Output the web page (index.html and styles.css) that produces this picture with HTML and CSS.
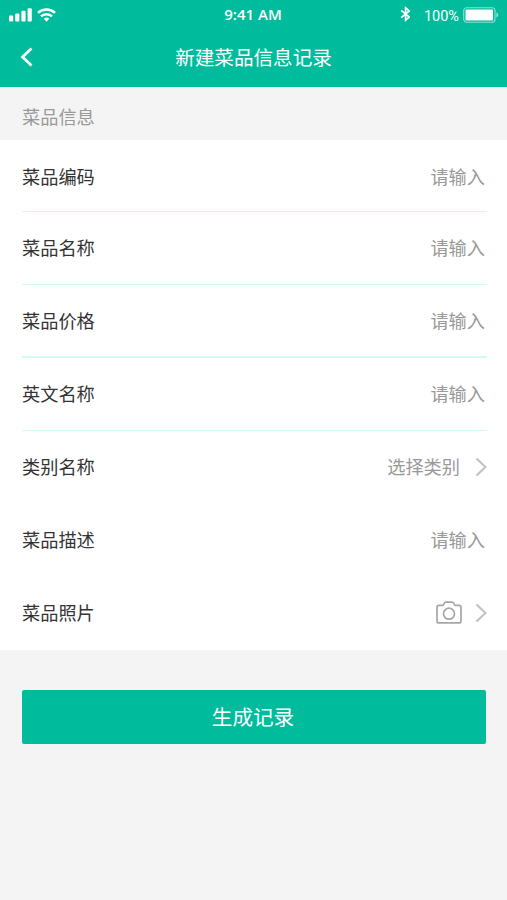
FILE: index.html
```
<!DOCTYPE html>
<html lang="zh-CN">
<head>
    <meta charset="UTF-8">
    <meta name="viewport" content="width=device-width, initial-scale=1.0">
    <title>新建菜品信息记录</title>
    <link rel="stylesheet" href="styles.css">
</head>
<body>

<header class="header">
    <div class="status-bar">
        <div class="status-left">
            <svg class="signal" width="24" height="14" viewBox="0 0 24 14" fill="#fff">
                <rect x="0" y="7.5" width="4.2" height="6" rx="1"/>
                <rect x="6.2" y="5.5" width="4.2" height="8" rx="1"/>
                <rect x="12.4" y="2.8" width="4.2" height="10.7" rx="1"/>
                <rect x="18.6" y="0.2" width="4.2" height="13.3" rx="1"/>
            </svg>
            <svg class="wifi" width="19" height="14" viewBox="0 0 19 14" fill="none" stroke="#fff" stroke-width="2.5">
                <path d="M1 4.900a12.300 12.300 0 0 1 17 0"/>
                <path d="M4 8.400a8 8 0 0 1 11 0"/>
                <path d="M6.700 10.800a4.200 4.200 0 0 1 5.600 0L9.500 13.700z" fill="#fff" stroke="none"/>
            </svg>
        </div>
        <span class="time">9:41 AM</span>
        <div class="status-right">
            <svg class="bluetooth" width="10" height="16" viewBox="0 0 10 16" fill="none" stroke="#fff" stroke-width="1.7">
                <path d="M1.200 4.300L9.300 11L5.600 14.200V1.800L9.300 5L1.200 11.700"/>
            </svg>
            <span class="percent">100%</span>
            <svg class="battery" width="36" height="16" viewBox="0 0 36 16">
                <rect x="0.7" y="0.7" width="31.3" height="14.6" rx="3" fill="none" stroke="#8fe0cf" stroke-width="1.1"/>
                <rect x="2.5" y="2.5" width="27.5" height="11" rx="1" fill="#fff"/>
                <path d="M33.300 5.500q2 .8 2 2.500t-2 2.500z" fill="#8fe0cf"/>
            </svg>
        </div>
    </div>
    <div class="nav-bar">
        <svg class="back" width="13" height="20" viewBox="0 0 13 20" fill="none" stroke="#fff" stroke-width="2.7">
            <path d="M11.500 1.500L2.500 10l9 8.500"/>
        </svg>
        <h1>新建菜品信息记录</h1>
    </div>
</header>

<div class="section-title">菜品信息</div>

<div class="form-list">
    <div class="row line first">
        <span class="label">菜品编码</span>
        <span class="value">请输入</span>
    </div>
    <div class="row line">
        <span class="label">菜品名称</span>
        <span class="value">请输入</span>
    </div>
    <div class="row line thick">
        <span class="label">菜品价格</span>
        <span class="value">请输入</span>
    </div>
    <div class="row line">
        <span class="label">英文名称</span>
        <span class="value">请输入</span>
    </div>
    <div class="row">
        <span class="label">类别名称</span>
        <span class="value select">选择类别</span>
        <svg class="arrow" width="12" height="20" viewBox="0 0 12 20" fill="none" stroke="#c2c2c2" stroke-width="2.2">
            <path d="M1.500 1.500L10.500 10l-9 8.500"/>
        </svg>
    </div>
    <div class="row">
        <span class="label">菜品描述</span>
        <span class="value">请输入</span>
    </div>
    <div class="row">
        <span class="label">菜品照片</span>
        <svg class="camera" width="26" height="23" viewBox="0 0 26 23" fill="none" stroke="#a6a6a6" stroke-width="1.7">
            <path d="M3 4.300h3.600q.8 0 1.100-.8l.6-1.400q.4-1 1.400-1h6.600q1 0 1.400 1l.6 1.400q.3.8 1.100.8H23q2 0 2 2v13.600q0 2-2 2H3q-2 0-2-2V6.300q0-2 2-2z"/>
            <circle cx="13" cy="12.7" r="5.5"/>
        </svg>
        <svg class="arrow" width="12" height="20" viewBox="0 0 12 20" fill="none" stroke="#c2c2c2" stroke-width="2.2">
            <path d="M1.500 1.500L10.500 10l-9 8.500"/>
        </svg>
    </div>
</div>

<button class="submit">生成记录</button>

</body>
</html>
```
FILE: styles.css
```
/* General styling */
* {
    box-sizing: border-box;
}
body {
    margin: 0;
    background-color: #f4f4f4;
    color: #333;
    font-family: "Noto Sans CJK SC", sans-serif;
    font-size: 18.2px;
}
svg {
    display: block;
    flex-shrink: 0;
}

/* Header */
.header {
    height: 87px;
    background-color: #00bc9c;
    color: #fff;
}
.status-bar {
    display: grid;
    grid-template-columns: 1fr auto 1fr;
    align-items: center;
    height: 30px;
    padding: 0 8px 0 9px;
}
.status-left,
.status-right {
    display: flex;
    align-items: center;
}
.status-left {
    gap: 4px;
}
.status-right {
    justify-content: flex-end;
}
.time {
    margin: 0 2px 2px 0;
    font-family: "Open Sans", sans-serif;
    font-size: 15px;
    font-weight: 600;
    line-height: 28px;
}
.bluetooth {
    margin-bottom: 2px;
}
.percent {
    margin: 3px 4px 0 14px;
    font-family: Roboto, sans-serif;
    font-size: 14.5px;
    line-height: 27px;
}
.nav-bar {
    display: grid;
    grid-template-columns: 1fr auto 1fr;
    align-items: center;
    height: 54px;
    padding: 0 20px;
}
.nav-bar h1 {
    margin: 0 0 2px;
    font-size: 19.6px;
    font-weight: 400;
}

/* Form */
.section-title {
    height: 53px;
    padding-left: 22px;
    color: #999;
    line-height: 58px;
}
.form-list {
    height: 510px;
    padding: 0 20px 0 22px;
    background-color: #fff;
}
.row {
    display: flex;
    align-items: center;
    height: 72.9px;
    padding-bottom: 2px;
}
.line {
    padding-bottom: 1px;
    border-bottom: 1px solid #d4fbf1;
}
.first {
    height: 72px;
    padding-bottom: 0;
}
.thick {
    padding-bottom: 0;
    border-bottom-width: 2px;
}
.label {
    margin-right: auto;
}
.value {
    margin-right: 2px;
    color: #999;
}
.select {
    margin-right: 15px;
}
.arrow,
.camera {
    margin-top: 2px;
}
.camera {
    margin-right: 13px;
}

/* Submit button */
.submit {
    display: block;
    width: 464px;
    height: 54px;
    margin: 40px 0 0 22px;
    padding: 0 2px 2px 0;
    border: none;
    border-radius: 2px;
    background-color: #00bc9c;
    color: #fff;
    font-family: inherit;
    font-size: 20.6px;
}
```
